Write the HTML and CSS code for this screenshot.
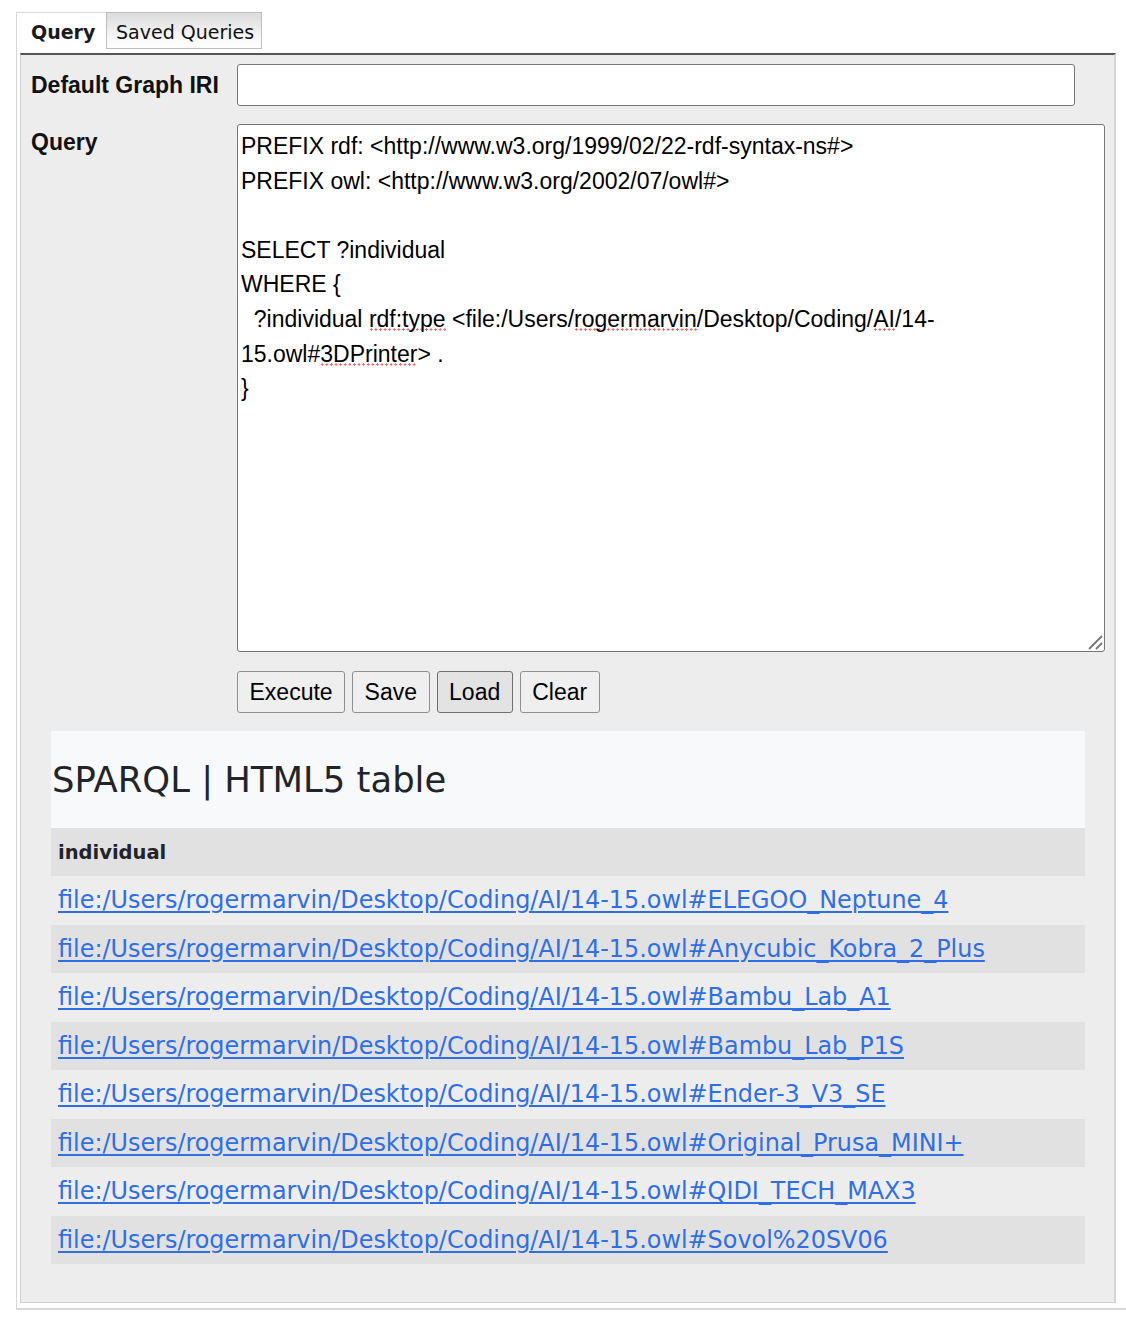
FILE: index.html
```html
<!DOCTYPE html>
<html lang="en">
<head>
<meta charset="utf-8">
<title>SPARQL Query</title>
<link rel="stylesheet" href="styles.css">
</head>
<body>
<div class="outer">
  <div class="tabs">
    <div class="tab tab-active">Query</div>
    <div class="tab tab-inactive">Saved Queries</div>
  </div>
  <div class="panel">
    <div class="form">
      <label class="label label-mid">Default Graph IRI</label>
      <input class="iri" type="text">
      <label class="label label-top">Query</label>
      <div class="query-box">
        <div class="query-text">PREFIX rdf: &lt;http://www.w3.org/1999/02/22-rdf-syntax-ns#&gt;
PREFIX owl: &lt;http://www.w3.org/2002/07/owl#&gt;

SELECT ?individual
WHERE {
  ?individual <span class="sp">rdf:type</span> &lt;file:/Users/<span class="sp">rogermarvin</span>/Desktop/Coding/<span class="sp">AI</span>/14-15.owl#<span class="sp">3DPrinter</span>&gt; .
}</div>
        <svg class="grip" width="16" height="16" viewBox="0 0 16 16"><path d="M2 15 L15 2 M9 15 L15 9" stroke="#777" stroke-width="1.8" fill="none"/></svg>
      </div>
      <div class="buttons">
        <button class="btn">Execute</button>
        <button class="btn">Save</button>
        <button class="btn btn-pressed">Load</button>
        <button class="btn">Clear</button>
      </div>
    </div>
    <div class="results">
      <div class="results-title">SPARQL | HTML5 table</div>
      <table class="rtable">
        <thead><tr><th>individual</th></tr></thead>
        <tbody>
          <tr><td><a href="#">file:/Users/rogermarvin/Desktop/Coding/AI/14-15.owl#ELEGOO_Neptune_4</a></td></tr>
          <tr><td><a href="#">file:/Users/rogermarvin/Desktop/Coding/AI/14-15.owl#Anycubic_Kobra_2_Plus</a></td></tr>
          <tr><td><a href="#">file:/Users/rogermarvin/Desktop/Coding/AI/14-15.owl#Bambu_Lab_A1</a></td></tr>
          <tr><td><a href="#">file:/Users/rogermarvin/Desktop/Coding/AI/14-15.owl#Bambu_Lab_P1S</a></td></tr>
          <tr><td><a href="#">file:/Users/rogermarvin/Desktop/Coding/AI/14-15.owl#Ender-3_V3_SE</a></td></tr>
          <tr><td><a href="#">file:/Users/rogermarvin/Desktop/Coding/AI/14-15.owl#Original_Prusa_MINI+</a></td></tr>
          <tr><td><a href="#">file:/Users/rogermarvin/Desktop/Coding/AI/14-15.owl#QIDI_TECH_MAX3</a></td></tr>
          <tr><td><a href="#">file:/Users/rogermarvin/Desktop/Coding/AI/14-15.owl#Sovol%20SV06</a></td></tr>
        </tbody>
      </table>
    </div>
  </div>
</div>
</body>
</html>
```
FILE: styles.css
```css
html, body {
  margin: 0;
  padding: 0;
  background: #fff;
}
body {
  font-family: "DejaVu Sans", Verdana, sans-serif;
  color: #111;
}
.outer {
  margin: 12px 0 0 16px;
  border-left: 1px solid #d6d6d6;
  border-bottom: 2px solid #d9d9d9;
  padding-bottom: 5px;
}
.tabs {
  display: flex;
  align-items: flex-start;
  height: 41px;
}
.tab {
  font-size: 19px;
  line-height: 38px;
  box-sizing: border-box;
}
.tab-active {
  height: 41px;
  width: 89px;
  padding-left: 14px;
  background: #fff;
  border-top: 1px solid #dcdcdc;
  font-weight: bold;
  color: #1a1a1a;
}
.tab-inactive {
  height: 37px;
  width: 156px;
  padding-left: 9px;
  border: 1px solid #bdbdbd;
  line-height: 38px;
  background: linear-gradient(#dcdcdc, #f7f7f7 70%, #fff);
  color: #111;
}
.panel {
  margin-left: 3px;
  width: 1096px;
  box-sizing: border-box;
  background: #ededed;
  border-top: 2px solid #555;
  border-left: 1px solid #cfcfcf;
  border-right: 2px solid #d4d4d4;
  border-bottom: 1px solid #cfcfcf;
  padding: 9px 9px 38px 10px;
}
.form {
  display: grid;
  grid-template-columns: 206px 868px;
  row-gap: 18px;
}
.label {
  font-family: "Liberation Sans", Arial, sans-serif;
  font-weight: bold;
  font-size: 23px;
  color: #111;
}
.label-mid {
  align-self: center;
}
.label-top {
  padding-top: 5px;
}
.iri {
  width: 838px;
  height: 42px;
  box-sizing: border-box;
  border: 1px solid #767676;
  border-radius: 3px;
  background: #fff;
  margin: 0;
  font-family: "Liberation Sans", Arial, sans-serif;
  font-size: 20px;
}
.query-box {
  position: relative;
  height: 528px;
  box-sizing: border-box;
  border: 1px solid #767676;
  border-radius: 3px;
  background: #fff;
  padding: 4px 3px;
}
.query-text {
  font-family: "Liberation Sans", Arial, sans-serif;
  font-size: 23px;
  line-height: 34.6px;
  white-space: pre-wrap;
  color: #000;
}
.sp {
  text-decoration: none;
  background-image: radial-gradient(circle, #ec6a63 1.1px, transparent 1.3px);
  background-size: 4.6px 3px;
  background-repeat: repeat-x;
  background-position: 0 88%;
  padding-bottom: 2px;
}
.grip {
  position: absolute;
  right: 1px;
  bottom: 1px;
}
.buttons {
  grid-column: 2;
  display: flex;
  gap: 7px;
  margin-top: 1px;
}
.btn {
  font-family: "Liberation Sans", Arial, sans-serif;
  font-size: 23px;
  height: 42px;
  padding: 0 11.5px;
  border: 1px solid #8f8f8f;
  border-radius: 3px;
  background: #efefef;
  color: #000;
}
.btn-pressed {
  background: #e3e3e3;
  border-color: #6f6f6f;
}
.results {
  margin: 18px 20px 0 20px;
}
.results-title {
  height: 97px;
  display: flex;
  align-items: center;
  padding-left: 1px;
  background: #f8f9fa;
  font-size: 35.4px;
  color: #212529;
  padding-bottom: 1px;
  box-sizing: border-box;
}
.rtable {
  width: 100%;
  border-collapse: collapse;
}
.rtable th {
  text-align: left;
  background: #e1e1e1;
  font-size: 19.5px;
  font-weight: bold;
  color: #212529;
  height: 48px;
  padding: 0 7px;
}
.rtable td {
  height: 48.5px;
  padding: 0 7px;
  font-size: 23.9px;
}
.rtable tbody tr:nth-child(even) td {
  background: #e1e1e1;
}
.rtable a {
  color: #2f6fe6;
  text-decoration: underline;
  text-underline-offset: 3px;
}
```
